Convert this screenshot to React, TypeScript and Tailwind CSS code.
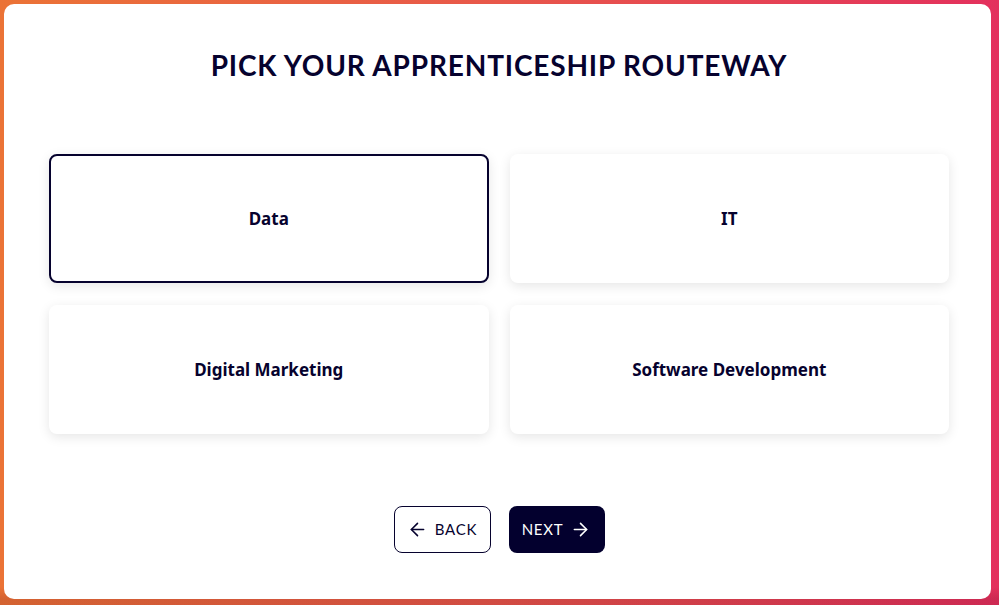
import React, { useState } from 'react';
import { ArrowLeft, ArrowRight } from 'lucide-react';

const routeways = ['Data', 'IT', 'Digital Marketing', 'Software Development'];

const App: React.FC = () => {
  const [selected, setSelected] = useState('Data');

  return (
    <div className="min-h-screen w-full bg-[linear-gradient(to_bottom,rgba(0,0,0,0)_0%,rgba(0,0,0,0)_97%,rgba(70,0,20,0.14)_99%),linear-gradient(to_right,#eb7336,#e8574a_50%,#e3305d)] pt-[4px] pl-[4px] pr-[8px] pb-[6px]">
      <div className="flex h-[595px] flex-col items-center rounded-[10px] bg-white pl-[45px] pr-[42px] pt-[40px]">
        <h1 className="font-['Lato',sans-serif] text-[28px] font-bold tracking-[0.03em] text-[#06022e]">
          PICK YOUR APPRENTICESHIP ROUTEWAY
        </h1>

        {/* Routeway options */}
        <div className="mt-[68px] grid w-full grid-cols-2 gap-x-[21px] gap-y-[22px]">
          {routeways.map((route) => (
            <button
              key={route}
              onClick={() => setSelected(route)}
              className={`flex h-[129px] items-center justify-center rounded-[8px] bg-white font-['Noto_Sans',sans-serif] text-[17px] font-bold text-[#06022e] shadow-[0_3px_12px_rgba(0,0,0,0.1)] ${
                selected === route ? 'border-2 border-[#06022e]' : 'border-2 border-transparent'
              }`}
            >
              {route}
            </button>
          ))}
        </div>

        {/* Navigation */}
        <div className="mt-[72px] flex gap-[18px] font-['Lato',sans-serif] text-[15px] tracking-[0.05em]">
          <button className="flex h-[47px] w-[97px] items-center justify-center gap-[7px] rounded-[8px] border border-[#06022e] text-[#06022e]">
            <ArrowLeft size={21} strokeWidth={1.8} />
            BACK
          </button>
          <button className="flex h-[47px] w-[96px] items-center justify-center gap-[7px] rounded-[8px] bg-[#03002e] text-white">
            NEXT
            <ArrowRight size={21} strokeWidth={1.8} />
          </button>
        </div>
      </div>
    </div>
  );
};

export default App;
